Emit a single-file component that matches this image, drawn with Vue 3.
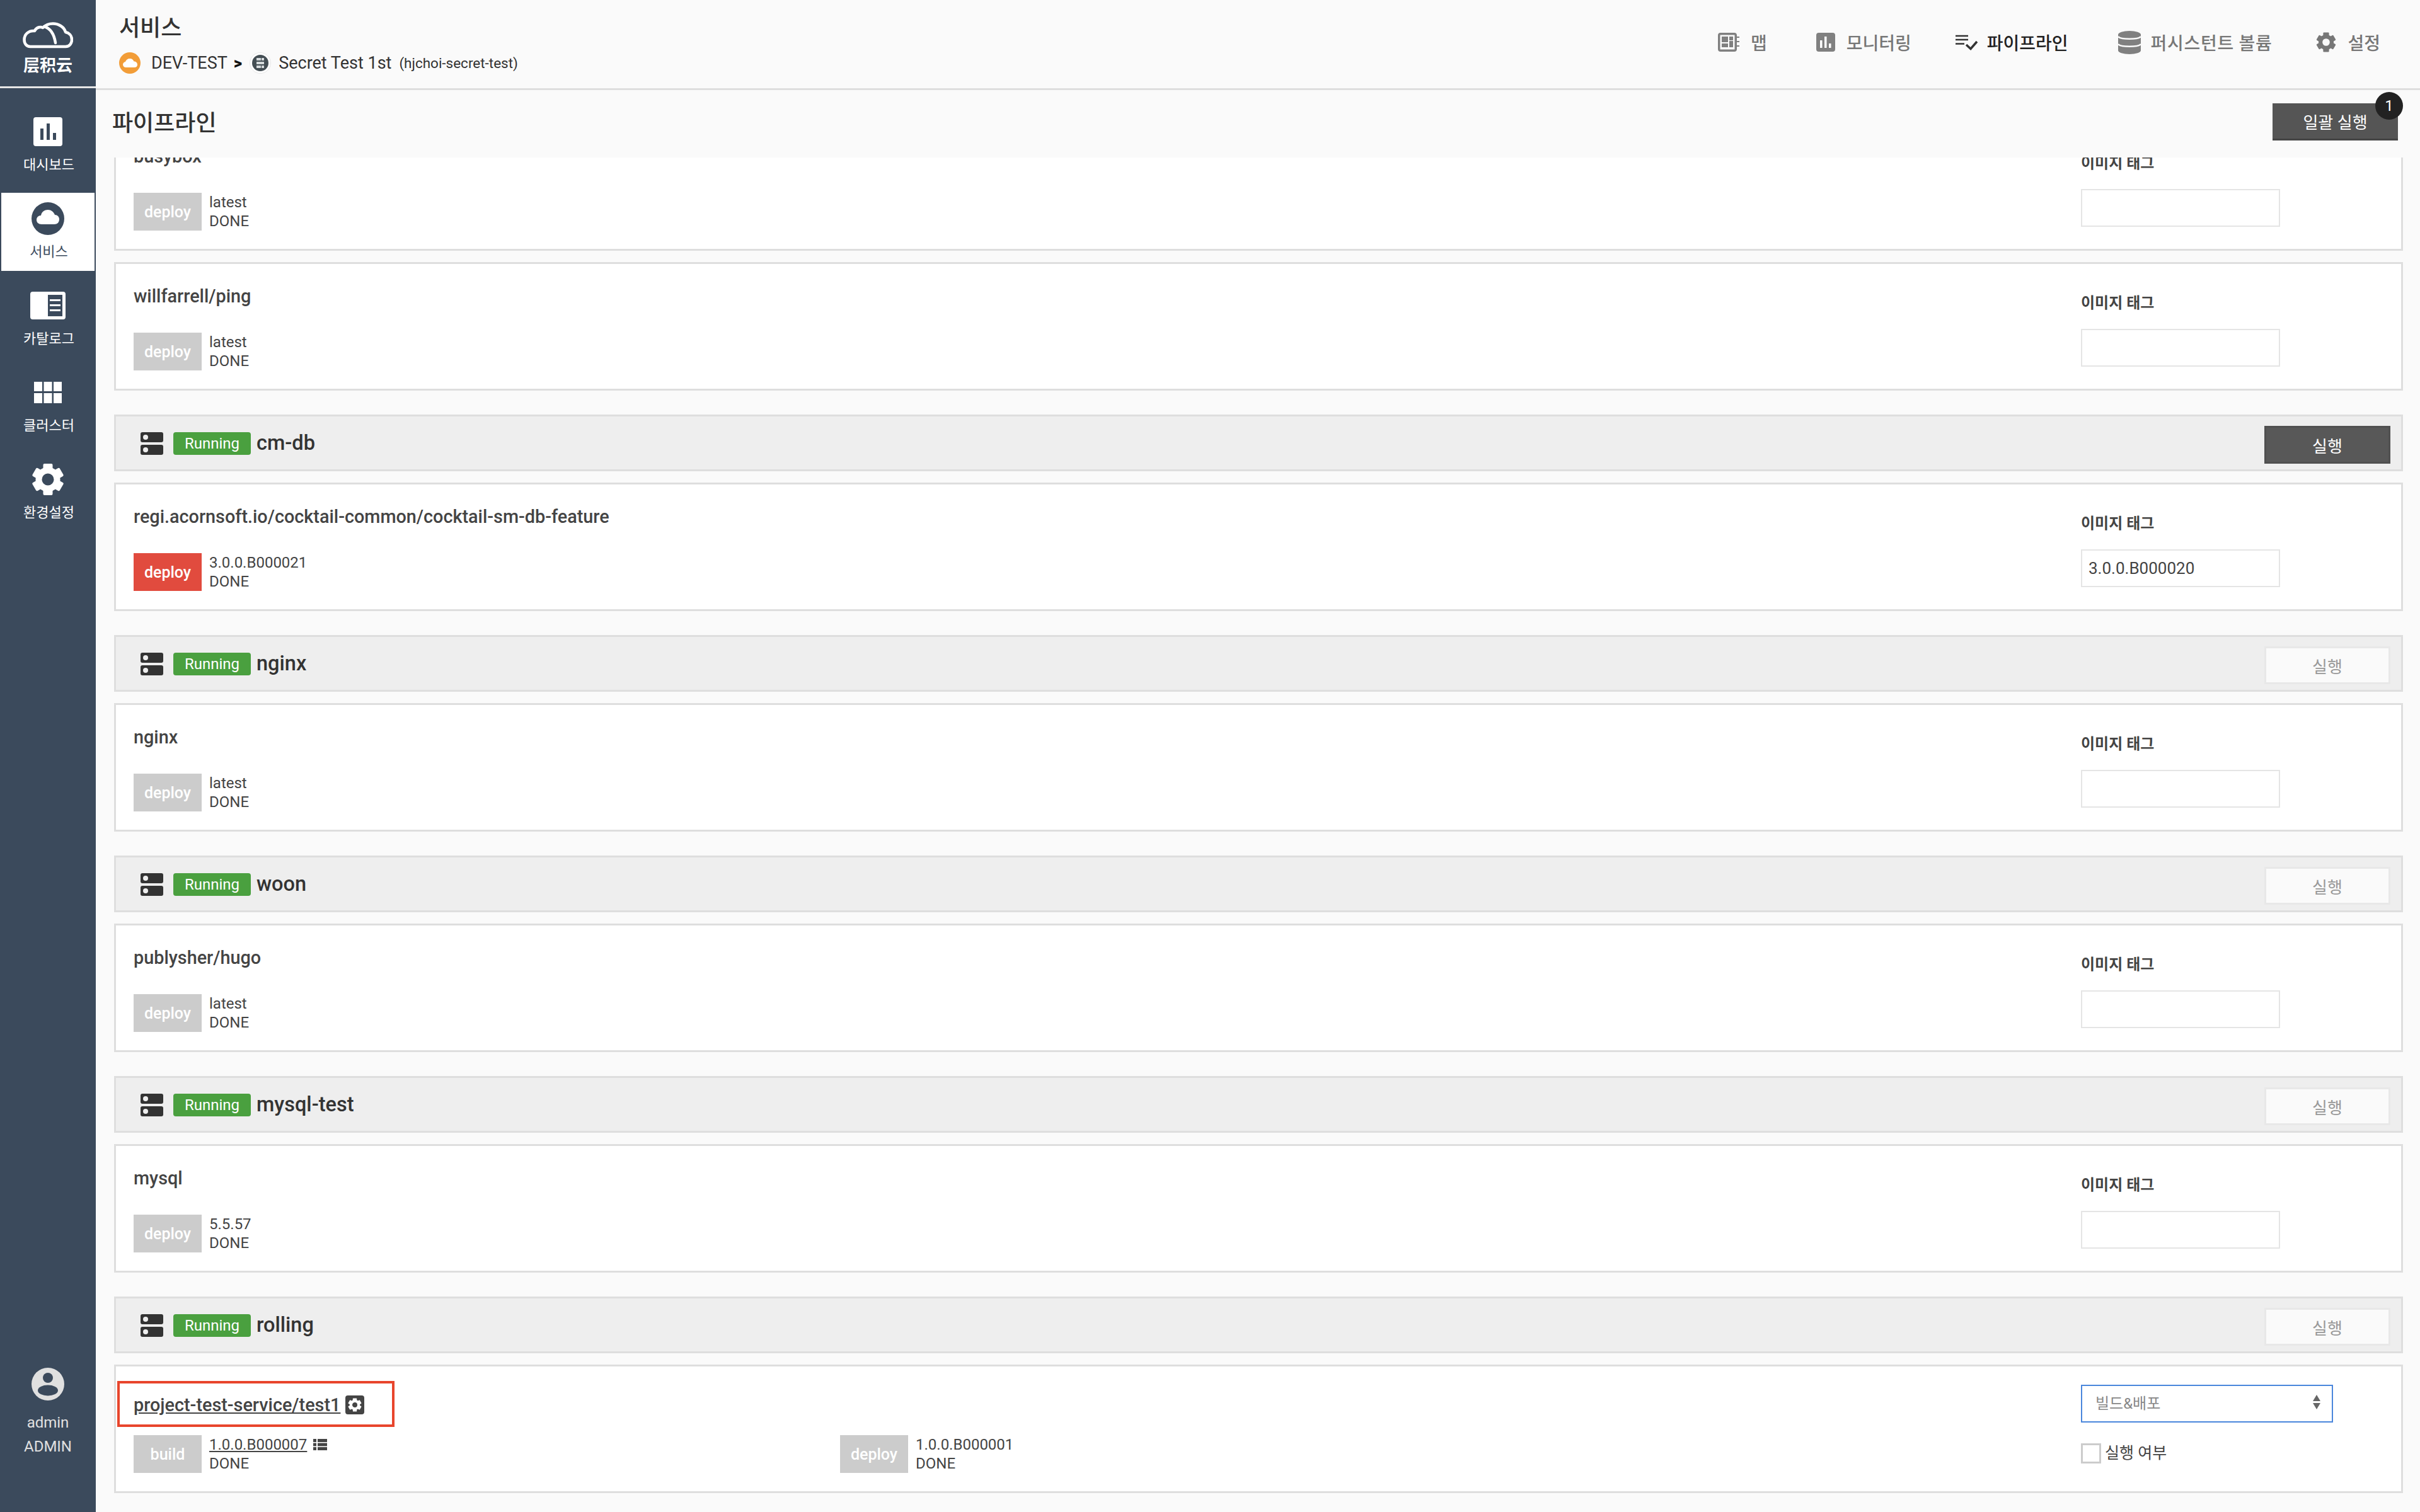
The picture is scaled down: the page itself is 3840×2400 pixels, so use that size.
<template>
  <div class="shell">
    <svg class="defs" width="0" height="0">
      <symbol id="gear" viewBox="0 0 52 52">
        <circle cx="26" cy="26" r="14.5" fill="none" stroke="currentColor" stroke-width="10" />
        <g fill="currentColor">
          <rect v-for="a in [0, 60, 120, 180, 240, 300]" :key="a" x="18.5" y="1" width="15" height="12" rx="2" :transform="`rotate(${a} 26 26)`" />
        </g>
      </symbol>
      <symbol id="server" viewBox="0 0 36 36">
        <rect x="0" y="0" width="36" height="16" rx="3" fill="currentColor" />
        <rect x="0" y="20" width="36" height="16" rx="3" fill="currentColor" />
        <circle cx="8" cy="8" r="4" fill="#eee" />
        <circle cx="8" cy="28" r="4" fill="#eee" />
      </symbol>
    </svg>

    <aside class="sidebar">
      <div class="logo">
        <svg width="80" height="42" viewBox="0 0 80 42" fill="none" stroke="#fff" stroke-width="4.5" stroke-linejoin="round" stroke-linecap="round">
          <path d="M12 39H68C75 39 78 33 78 28 78 21 73 17 68 16 66 8 57 2.500 48 2.500 41 2.500 36 5 32 9 28 7 22 8 19 14 9 13 2.500 20 2.500 28 2.500 34 6 39 12 39Z" />
          <path d="M34 7C44 10 50 20 52 33" />
        </svg>
        <span>层积云</span>
      </div>

      <nav class="side-nav">
        <a class="side-item">
          <div class="side-icon">
            <svg width="46" height="46" viewBox="0 0 46 46">
              <rect width="46" height="46" rx="4" fill="#fff" />
              <path d="M11 18h5v18h-5zM21 10h5v26h-5zM31 25h5v11h-5z" fill="#3b4a5c" />
            </svg>
          </div>
          <span>대시보드</span>
        </a>
        <a class="side-item active">
          <div class="side-icon">
            <svg width="52" height="52" viewBox="0 0 52 52">
              <circle cx="26" cy="26" r="26" fill="#3b4a5c" />
              <path d="M16 35c-5 0-8-3-8-7 0-4 3-7 7-7 1-6 6-9 11-9 5 0 9 3 11 8 4 0 7 3 7 7 0 5-3 8-8 8z" fill="#fff" />
            </svg>
          </div>
          <span>서비스</span>
        </a>
        <a class="side-item">
          <div class="side-icon">
            <svg width="56" height="44" viewBox="0 0 56 44">
              <rect width="56" height="44" rx="4" fill="#fff" />
              <rect x="28" y="5" width="23" height="34" fill="#3b4a5c" />
              <path d="M31 12h17v3H31zM31 20h17v3H31zM31 28h17v3H31z" fill="#fff" />
            </svg>
          </div>
          <span>카탈로그</span>
        </a>
        <a class="side-item">
          <div class="side-icon">
            <svg width="44" height="34" viewBox="0 0 44 34" fill="#fff">
              <path d="M0 0h13v15H0zM15.500 0h13v15h-13zM31 0h13v15H31zM0 18h13v16H0zM15.500 18h13v16h-13zM31 18h13v16H31z" />
            </svg>
          </div>
          <span>클러스터</span>
        </a>
        <a class="side-item">
          <div class="side-icon">
            <svg class="side-gear" width="52" height="52"><use href="#gear" /></svg>
          </div>
          <span>환경설정</span>
        </a>
      </nav>

      <div class="user">
        <svg width="52" height="52" viewBox="0 0 52 52">
          <circle cx="26" cy="26" r="26" fill="#e0e0e0" />
          <circle cx="26" cy="16" r="8" fill="#3b4a5c" />
          <ellipse cx="26" cy="36" rx="16" ry="8.500" fill="#3b4a5c" />
        </svg>
        <div class="user-name">admin</div>
        <div class="user-role">ADMIN</div>
      </div>
    </aside>

    <main class="main">
      <header class="topbar">
        <div class="crumbs">
          <h1>서비스</h1>
          <div class="path">
            <svg class="path-cloud" width="34" height="34" viewBox="0 0 34 34">
              <circle cx="17" cy="17" r="17" fill="#f29d38" />
              <path d="M11 24c-3 0-5-2-5-4.500s2-4 4-4.500c1-3 3.500-5 7-5 3.500 0 5.500 2 6.500 4.500 3 0 5.500 2 5.500 5s-2 4.500-5 4.500z" fill="#fff" />
            </svg>
            <span class="path-name">DEV-TEST</span>
            <b class="path-sep">&gt;</b>
            <svg width="34" height="34" viewBox="0 0 34 34">
              <circle cx="17" cy="17" r="16.500" fill="#fff" stroke="#e6e6e6" />
              <circle cx="17" cy="17" r="13" fill="#444e54" />
              <path d="M11 9h7v4h-7zM19 9h4v4h-4zM11 15h12v4H11zM11 21h7v4h-7zM19 21h4v4h-4z" fill="#d5dadc" />
            </svg>
            <span class="path-name">Secret Test 1st</span>
            <span class="path-id">(hjchoi-secret-test)</span>
          </div>
        </div>

        <nav class="tabs">
          <a class="tab map">
            <svg width="34" height="30" viewBox="0 0 34 30" fill="#808080">
              <path d="M4 0h22c2.500 0 4 1.500 4 4v22c0 2.500-1.500 4-4 4H4c-2.500 0-4-1.500-4-4V4c0-2.500 1.500-4 4-4zm0 3.500c-.5 0-.5 0-.5.500v22c0 .5 0 .5.500.5h22c.5 0 .5 0 .5-.5V4c0-.5 0-.5-.5-.5z" fill-rule="evenodd" />
              <path d="M6 6h10v9H6zM6 17h10v6H6zM18 6h6v6h-6zM18 13h6v10h-6zM30 6h4v2h-4zM30 13h4v2h-4zM30 20h4v2h-4z" />
            </svg>
            맵
          </a>
          <a class="tab">
            <svg width="30" height="30" viewBox="0 0 30 30">
              <rect width="30" height="30" rx="4" fill="#808080" />
              <path d="M6 12h3.500v12H6zM13 6h3.500v18H13zM20 17h3.500v7H20z" fill="#fff" />
            </svg>
            모니터링
          </a>
          <a class="tab current">
            <svg width="36" height="26" viewBox="0 0 36 26" fill="none" stroke="#333" stroke-width="2.500">
              <path d="M0 3h20M0 9h20M0 15.500h14" />
              <path d="M17 17l7 6.500L34 12" stroke-width="3.500" />
            </svg>
            파이프라인
          </a>
          <a class="tab storage">
            <svg width="36" height="37" viewBox="0 0 36 37">
              <path d="M0 6a18 6 0 0 1 36 0V31a18 6 0 0 1-36 0z" fill="#808080" />
              <path d="M0 9c4 5 32 5 36 0M0 21c4 5 32 5 36 0" fill="none" stroke="#fafafa" stroke-width="2.500" />
            </svg>
            퍼시스턴트 볼륨
          </a>
          <a class="tab">
            <svg width="32" height="34"><use href="#gear" /></svg>
            설정
          </a>
        </nav>
      </header>

      <div class="subbar">
        <h2>파이프라인</h2>
        <button class="bulk">
          일괄 실행
          <span class="count">1</span>
        </button>
      </div>

      <div class="scroller">
        <div class="list">
          <template v-for="group in groups" :key="group.name">
            <div v-if="group.status" class="group-head">
              <svg class="server" width="36" height="36"><use href="#server" /></svg>
              <span class="status">{{ group.status }}</span>
              <span class="group-name">{{ group.name }}</span>
              <button class="run" :class="{ on: group.active }">실행</button>
            </div>
            <section class="card" :class="{ first: group.name === 'busybox' }">
              <div class="card-left">
                <div v-if="!group.build" class="image-name">{{ group.image }}</div>
                <div v-else class="image-name linked">
                  <span class="highlight"></span>
                  <u>{{ group.image }}</u>
                  <svg class="cfg" width="30" height="30" viewBox="0 0 30 30">
                    <rect width="30" height="30" rx="4" fill="#444" />
                    <svg x="4" y="4" width="22" height="22" color="#fff"><use href="#gear" /></svg>
                  </svg>
                </div>
                <div class="steps">
                  <div v-if="group.build" class="step">
                    <span class="tag">build</span>
                    <div class="step-text">
                      <div>
                        <u>{{ group.build }}</u>
                        <svg class="list-icon" width="22" height="18" viewBox="0 0 22 18" fill="#444">
                          <path d="M0 0h5v5H0zM7 0h15v5H7zM0 6.500h5v5H0zM7 6.500h15v5H7zM0 13h5v5H0zM7 13h15v5H7z" />
                        </svg>
                      </div>
                      <div>DONE</div>
                    </div>
                  </div>
                  <div class="step">
                    <span class="tag" :class="{ red: group.active }">deploy</span>
                    <div class="step-text">
                      <div>{{ group.version }}</div>
                      <div>DONE</div>
                    </div>
                  </div>
                </div>
              </div>

              <div v-if="!group.build" class="card-right">
                <label class="field-label">이미지 태그</label>
                <input class="tag-input" type="text" :value="group.tag" />
              </div>
              <div v-else class="card-right compact">
                <div class="select">
                  빌드&amp;배포
                  <span class="arrows"><i></i><i></i></span>
                </div>
                <div class="check">
                  <span class="box"></span>
                  실행 여부
                </div>
              </div>
            </section>
          </template>
        </div>
      </div>
    </main>
  </div>
</template>

<script setup>
const groups = [
  { name: 'busybox', image: 'busybox', version: 'latest' },
  { name: 'ping', image: 'willfarrell/ping', version: 'latest' },
  { name: 'cm-db', status: 'Running', active: true, image: 'regi.acornsoft.io/cocktail-common/cocktail-sm-db-feature', version: '3.0.0.B000021', tag: '3.0.0.B000020' },
  { name: 'nginx', status: 'Running', image: 'nginx', version: 'latest' },
  { name: 'woon', status: 'Running', image: 'publysher/hugo', version: 'latest' },
  { name: 'mysql-test', status: 'Running', image: 'mysql', version: '5.5.57' },
  { name: 'rolling', status: 'Running', image: 'project-test-service/test1', build: '1.0.0.B000007', version: '1.0.0.B000001' }
]
</script>

<style>
html, body {
  margin: 0;
  background: #fafafa;
}
</style>

<style scoped>
.shell {
  display: flex;
  width: 3840px;
  height: 2400px;
  overflow: hidden;
  background: #fafafa;
  color: #444;
  font-family: Roboto, "Noto Sans CJK KR", sans-serif;
}
.defs {
  position: absolute;
}

/* sidebar */
.sidebar {
  width: 152px;
  flex: none;
  display: flex;
  flex-direction: column;
  background: #3b4a5c;
  color: #fff;
}
.logo {
  height: 140px;
  box-sizing: border-box;
  border-bottom: 3px solid #e6e6e6;
  padding-top: 35px;
  display: flex;
  flex-direction: column;
  align-items: center;
  gap: 10px;
  font-family: "Noto Sans CJK SC", sans-serif;
  font-size: 26px;
  line-height: 30px;
  font-weight: 700;
}
.side-nav {
  display: flex;
  flex-direction: column;
  padding-top: 28px;
}
.side-item {
  height: 138px;
  display: flex;
  flex-direction: column;
  align-items: center;
  font-size: 22px;
  line-height: 30px;
}
.side-icon {
  height: 52px;
  margin-top: 15px;
  display: flex;
  align-items: center;
}
.side-item span {
  margin-top: 12px;
  padding-left: 3px;
}
.side-item.active {
  height: 124px;
  margin: 0 2px 14px;
  background: #fff;
  color: #3b4a5c;
}
.side-gear {
  color: #fff;
}
.user {
  margin-top: auto;
  padding-bottom: 89px;
  display: flex;
  flex-direction: column;
  align-items: center;
  color: #e0e0e0;
  font-size: 24px;
}
.user-name {
  margin-top: 20px;
  line-height: 30px;
}
.user-role {
  margin-top: 8px;
  line-height: 30px;
}

/* header */
.main {
  flex: 1;
  min-width: 0;
  display: flex;
  flex-direction: column;
}
.topbar {
  height: 140px;
  flex: none;
  border-bottom: 3px solid #dedede;
  display: flex;
  justify-content: space-between;
  align-items: center;
  padding: 0 63px 0 37px;
}
.crumbs h1 {
  margin: 0 0 16px;
  font-size: 36px;
  line-height: 44px;
  font-weight: 500;
  color: #333;
}
.path {
  display: flex;
  align-items: center;
  font-size: 27px;
  color: #333;
}
.path-name {
  margin-left: 12px;
}
.path-cloud + .path-name {
  margin-left: 17px;
}
.path-sep {
  margin: 0 12px 0 10px;
  font-size: 26px;
  font-weight: 900;
  color: #111;
}
.path-id {
  margin-left: 12px;
  font-size: 22.5px;
}
.tabs {
  display: flex;
  align-items: center;
  gap: 70px;
  margin-bottom: 6px;
}
.tab {
  display: flex;
  align-items: center;
  gap: 18px;
  font-size: 28px;
  font-weight: 500;
  color: #777;
}
.tab.map {
  margin-right: 8px;
}
.tab.current {
  gap: 14px;
  margin-right: 9px;
  color: #222;
}
.tab.storage {
  gap: 16px;
  letter-spacing: .7px;
}

/* title bar */
.subbar {
  height: 101px;
  padding: 0 35px 6px 26px;
  flex: none;
  display: flex;
  justify-content: space-between;
  align-items: center;
}
.subbar h2 {
  margin: 0 0 4px;
  font-size: 36px;
  font-weight: 500;
  color: #333;
}
.bulk {
  position: relative;
  width: 199px;
  height: 59px;
  padding: 0;
  border: none;
  border-bottom: 3px solid #444;
  background: #555;
  color: #fff;
  font: inherit;
  font-size: 26px;
}
.count {
  position: absolute;
  top: -18px;
  right: -8px;
  width: 44px;
  height: 44px;
  border-radius: 50%;
  background: #222;
  font-size: 24px;
  line-height: 44px;
  text-align: center;
}

/* list */
.scroller {
  flex: 1;
  min-height: 0;
  overflow: hidden;
}
.list {
  margin: -56px 27px 0 29px;
  display: flex;
  flex-direction: column;
}
.group-head {
  height: 90px;
  box-sizing: border-box;
  margin-bottom: 18px;
  padding: 6px 17px 0 39px;
  border: 3px solid #dedede;
  background: #eee;
  display: flex;
  align-items: center;
}
.server {
  margin-top: -4px;
  color: #333;
}
.status {
  margin: -4px 0 0 16px;
  width: 123px;
  height: 36px;
  border-radius: 4px;
  background: #4aa03f;
  color: #fff;
  font-size: 24px;
  line-height: 36px;
  text-align: center;
}
.group-name {
  margin: -6px 0 0 9px;
  font-size: 32.5px;
  font-weight: 500;
  color: #333;
}
.run {
  margin-left: auto;
  width: 200px;
  height: 60px;
  padding: 0;
  border: 3px solid #e8e8e8;
  background: #fafafa;
  color: #999;
  font: inherit;
  font-size: 26px;
}
.run.on {
  border-color: #505050;
  background: #585858;
  color: #fff;
}
.card {
  height: 204px;
  box-sizing: border-box;
  margin-bottom: 38px;
  padding-left: 28px;
  border: 3px solid #dedede;
  background: #fff;
  display: flex;
}
.card.first {
  margin-bottom: 18px;
}
.card-left {
  flex: 1;
  min-width: 0;
  display: flex;
  flex-direction: column;
}
.image-name {
  height: 44px;
  margin: 29px 0 36px;
  font-size: 28.8px;
  font-weight: 500;
  line-height: 44px;
  color: #444;
}
.image-name.linked {
  position: relative;
  display: flex;
  align-items: center;
  gap: 8px;
  margin: 39px 0 26px;
}
.highlight {
  position: absolute;
  left: -26px;
  top: -16px;
  width: 440px;
  height: 73px;
  box-sizing: border-box;
  border: 4px solid #e8452c;
}
.steps {
  display: flex;
}
.step {
  width: 1121px;
  display: flex;
  gap: 12px;
}
.tag {
  width: 108px;
  height: 60px;
  background: #ccc;
  color: #fff;
  font-size: 25px;
  font-weight: 500;
  line-height: 62px;
  text-align: center;
}
.tag.red {
  background: #e14b3e;
}
.step-text {
  font-size: 24px;
  line-height: 30px;
  color: #444;
}
.list-icon {
  margin-left: 10px;
  vertical-align: -1px;
}
.card-right {
  width: 508px;
  flex: none;
  padding-top: 45px;
}
.field-label {
  display: block;
  height: 34px;
  font-size: 24px;
  font-weight: 700;
  line-height: 34px;
  color: #444;
}
.tag-input {
  display: block;
  margin-top: 24px;
  width: 316px;
  height: 60px;
  box-sizing: border-box;
  padding: 0 10px;
  border: 2px solid #e5e5e5;
  outline: none;
  background: #fff;
  font: inherit;
  font-size: 26px;
  color: #444;
}
.card-right.compact {
  padding-top: 29px;
}
.select {
  position: relative;
  width: 400px;
  height: 60px;
  box-sizing: border-box;
  padding-left: 21px;
  border: 2px solid #4a86dc;
  font-size: 24px;
  line-height: 56px;
  color: #888;
}
.arrows {
  position: absolute;
  right: 18px;
  top: 14px;
  display: flex;
  flex-direction: column;
  gap: 3px;
}
.arrows i {
  width: 0;
  height: 0;
  border-left: 6px solid transparent;
  border-right: 6px solid transparent;
  border-bottom: 10px solid #666;
}
.arrows i + i {
  border-bottom: none;
  border-top: 10px solid #666;
}
.check {
  margin-top: 32px;
  display: flex;
  align-items: center;
  gap: 6px;
  font-size: 25px;
  line-height: 34px;
  color: #444;
}
.box {
  width: 32px;
  height: 32px;
  box-sizing: border-box;
  border: 3px solid #ccc;
  background: #fff;
}
</style>
